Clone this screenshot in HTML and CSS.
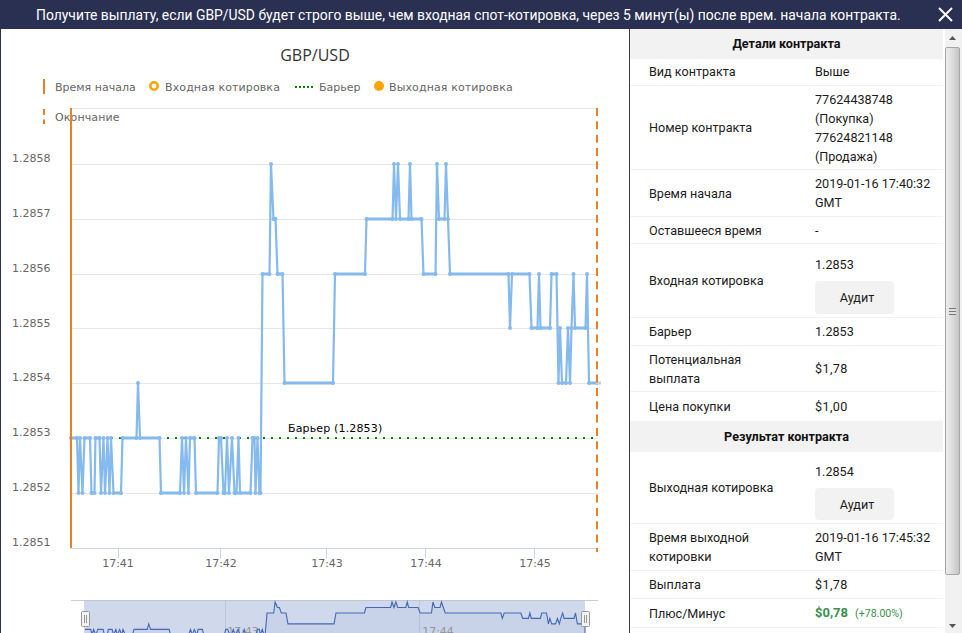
FILE: index.html
```html
<!DOCTYPE html>
<html lang="ru">
<head>
<meta charset="utf-8">
<title>Детали контракта</title>
<link rel="stylesheet" href="styles.css">
</head>
<body>
<header class="topbar">
  <span class="topbar-text">Получите выплату, если GBP/USD будет строго выше, чем входная спот-котировка, через 5 минут(ы) после врем. начала контракта.</span>
  <svg class="close" viewBox="0 0 15 15" width="15" height="15"><path d="M1 1L14 14M14 1L1 14"/></svg>
</header>
<main class="main">
  <section class="chart">
    <svg class="chart-svg" width="628" height="604" viewBox="1 29 628 604">
      <defs>
        <marker id="dot" markerUnits="userSpaceOnUse" markerWidth="6" markerHeight="6" refX="3" refY="3">
          <circle cx="3" cy="3" r="2" class="dot"/>
        </marker>
      </defs>
      <text class="title" x="315" y="61" text-anchor="middle">GBP/USD</text>

      <rect class="legend-start" x="43" y="79" width="2" height="15"/>
      <text class="legend legend-tight" x="55" y="91">Время начала</text>
      <circle class="legend-entry" cx="154" cy="86" r="3.7"/>
      <text class="legend" x="165" y="91">Входная котировка</text>
      <line class="legend-barrier" x1="295" x2="314" y1="87" y2="87"/>
      <text class="legend legend-tight" x="319" y="91">Барьер</text>
      <circle class="legend-exit" cx="379" cy="86" r="5"/>
      <text class="legend" x="389" y="91">Выходная котировка</text>
      <line class="legend-end" x1="44" x2="44" y1="109" y2="124"/>
      <text class="legend" x="55" y="121">Окончание</text>

      <path class="grid" d="M71 108.500H598M71 164.500H598M71 219.500H598M71 274.500H598M71 328.500H598M71 383.500H598M69 438.500H598M71 493.500H598"/>
      <path class="axis" d="M71 548.500H598M118.500 548V558M220.500 548V558M326.500 548V558M425.500 548V558M534.500 548V558"/>
      <text class="tick" x="12" y="162">1.2858</text>
      <text class="tick" x="12" y="217">1.2857</text>
      <text class="tick" x="12" y="272">1.2856</text>
      <text class="tick" x="12" y="327">1.2855</text>
      <text class="tick" x="12" y="381">1.2854</text>
      <text class="tick" x="12" y="436">1.2853</text>
      <text class="tick" x="12" y="491">1.2852</text>
      <text class="tick" x="12" y="546">1.2851</text>
      <text class="tick" x="118" y="567" text-anchor="middle">17:41</text>
      <text class="tick" x="221" y="567" text-anchor="middle">17:42</text>
      <text class="tick" x="327" y="567" text-anchor="middle">17:43</text>
      <text class="tick" x="426" y="567" text-anchor="middle">17:44</text>
      <text class="tick" x="535" y="567" text-anchor="middle">17:45</text>

      <line class="barrier" x1="71" x2="597" y1="438" y2="438"/>
      <path class="runs" d="M71 438H77M84.500 438H90M91.500 493H94.500M95.500 438H99.500M113.500 493H121M122.500 438H136.500M140 438H159.500M161 493H180M190 438H194.500M196 493H217.500M219 438H221M223.500 493H225M234.500 493H236.500M240 493H250.500M252.500 438H254.500M259.500 493H260.500M262.500 274H269.500M273.500 219H275.500M277.500 274H282.500M284.500 383H333M335 274H365M366.500 219H392.500M400 219H408.500M411.500 219H421.500M423.500 274H435.500M439 219H444.500M450 274H508.500M512 274H529.500M531.500 328H537.500M540.500 328H550M551.500 274H556.500M562 383H566M575 328H585.500M589 383H597"/>
      <polyline class="series" points="71,438 77,438 78.5,493 80,438 82.5,493 84.5,438 90,438 91.5,493 94.5,493 95.5,438 99.5,438 101,493 103.5,438 105,493 107.5,438 109.5,493 111,438 113.5,493 121,493 122.5,438 136.5,438 138,383 140,438 159.5,438 161,493 180,493 182,438 184,493 186,438 188.5,493 190,438 194.5,438 196,493 217.5,493 219,438 221,438 223.5,493 225,493 227,438 229,493 232,438 234.5,493 236.5,493 238.5,438 240,493 250.5,493 252.5,438 254.5,438 255.5,493 257.5,438 259.5,493 260.5,493 262.5,274 269.5,274 271,164 273.5,219 275.5,219 277.5,274 282.5,274 284.5,383 333,383 335,274 365,274 366.5,219 392.5,219 394,164 396,219 398,164 400,219 408.5,219 410,164 411.5,219 421.5,219 423.5,274 435.5,274 437,164 439,219 444.5,219 446,164 448,219 450,274 508.5,274 510,328 512,274 529.5,274 531.5,328 537.5,328 539,274 540.5,328 550,328 551.5,274 556.5,274 558.5,383 560,328 562,383 566,383 568,328 570,383 571.5,328 573.5,274 575,328 585.5,328 587,274 589,383 597,383"/>
      <line class="series-tail" x1="596" x2="601" y1="383" y2="383"/>
      <line class="start-line" x1="71" x2="71" y1="108" y2="548"/>
      <line class="end-line" x1="597" x2="597" y1="108" y2="552"/>
      <text class="barrier-label" x="288" y="432">Барьер (1.2853)</text>

      <path class="nav-border" d="M71 600.500H85M585 600.500H598"/>
      <rect class="nav-mask" x="84" y="600" width="501" height="33"/>
      <path class="nav-top" d="M84 600.500H585"/>
      <path class="nav-grid" d="M225.500 601V633M419.500 601V633"/>
      <text class="nav-tick" x="243" y="635" text-anchor="middle">17:43</text>
      <text class="nav-tick" x="438" y="635" text-anchor="middle">17:44</text>
      <g class="nav-series" transform="matrix(.9506 0 0 .1 17.5 585.600)">
        <polyline points="71,438 77,438 78.5,493 80,438 82.5,493 84.5,438 90,438 91.5,493 94.5,493 95.5,438 99.5,438 101,493 103.5,438 105,493 107.5,438 109.5,493 111,438 113.5,493 121,493 122.5,438 136.5,438 138,383 140,438 159.5,438 161,493 180,493 182,438 184,493 186,438 188.5,493 190,438 194.5,438 196,493 217.5,493 219,438 221,438 223.5,493 225,493 227,438 229,493 232,438 234.5,493 236.5,493 238.5,438 240,493 250.5,493 252.5,438 254.5,438 255.5,493 257.5,438 259.5,493 260.5,493 262.5,274 269.5,274 271,164 273.5,219 275.5,219 277.5,274 282.5,274 284.5,383 333,383 335,274 365,274 366.5,219 392.5,219 394,164 396,219 398,164 400,219 408.5,219 410,164 411.5,219 421.5,219 423.5,274 435.5,274 437,164 439,219 444.5,219 446,164 448,219 450,274 508.5,274 510,328 512,274 529.5,274 531.5,328 537.5,328 539,274 540.5,328 550,328 551.5,274 556.5,274 558.5,383 560,328 562,383 566,383 568,328 570,383 571.5,328 573.5,274 575,328 585.5,328 587,274 589,383 597,383 597,700 71,700"/>
      </g>
      <g class="handle">
        <rect x="81.500" y="611.500" width="8" height="15" rx="1"/>
        <path d="M84.500 615V623M86.500 615V623"/>
      </g>
      <g class="handle">
        <rect x="581.500" y="611.500" width="8" height="15" rx="1"/>
        <path d="M584.500 615V623M586.500 615V623"/>
      </g>
    </svg>
  </section>

  <aside class="details">
    <div class="table">
      <h3 class="heading h-top">Детали контракта</h3>
      <div class="row rh-27 row-first"><span class="label">Вид контракта</span><span class="value">Выше</span></div>
      <div class="row rh-84"><span class="label">Номер контракта</span><span class="value">77624438748<br>(Покупка)<br>77624821148<br>(Продажа)</span></div>
      <div class="row rh-47"><span class="label">Время начала</span><span class="value">2019-01-16 17:40:32 GMT</span></div>
      <div class="row rh-27"><span class="label">Оставшееся время</span><span class="value">-</span></div>
      <div class="row rh-74"><span class="label">Входная котировка</span><span class="value value-audit-a">1.2853<button class="audit audit-a">Аудит</button></span></div>
      <div class="row rh-28"><span class="label">Барьер</span><span class="value">1.2853</span></div>
      <div class="row rh-46"><span class="label">Потенциальная выплата</span><span class="value money">$1,78</span></div>
      <div class="row rh-29 row-last"><span class="label">Цена покупки</span><span class="value money">$1,00</span></div>
      <h3 class="heading h-bottom">Результат контракта</h3>
      <div class="row rh-72"><span class="label">Выходная котировка</span><span class="value value-audit-b">1.2854<button class="audit audit-b">Аудит</button></span></div>
      <div class="row rh-47"><span class="label">Время выходной котировки</span><span class="value">2019-01-16 17:45:32 GMT</span></div>
      <div class="row rh-28"><span class="label">Выплата</span><span class="value money">$1,78</span></div>
      <div class="row rh-29"><span class="label">Плюс/Минус</span><span class="value"><b class="profit">$0,78</b><small class="percent">(+78.00%)</small></span></div>
    </div>
    <div class="scrollbar">
      <svg class="arrow" viewBox="0 0 7 4" width="7" height="4"><path d="M3.500 0L7 4H0Z"/></svg>
      <div class="thumb"><span class="grip"></span></div>
      <svg class="arrow" viewBox="0 0 7 4" width="7" height="4"><path d="M0 0H7L3.500 4Z"/></svg>
    </div>
  </aside>
</main>
</body>
</html>
```

FILE: styles.css
```css
* { box-sizing: border-box; }
html, body { margin: 0; height: 633px; overflow: hidden; background: #fff; }
body { display: flex; flex-direction: column; font-family: Roboto, "Liberation Sans", sans-serif; color: #1c1c1c; }

.topbar {
  height: 29px; flex: none; display: flex; align-items: center; justify-content: space-between;
  padding: 0 9px 0 36px; background: #2a3052; color: #fff; font-size: 13.9px;
}
.topbar-text { white-space: nowrap; }
.close { display: block; }
.close path { stroke: #fff; stroke-width: 2; fill: none; }

.main { flex: 1; display: flex; min-height: 0; }
.chart { width: 629px; flex: none; border-left: 1px solid #2a3052; overflow: hidden; }
.chart-svg { display: block; }

.title { font: 16px "Open Sans", sans-serif; fill: #333; }
.legend { font: 11px "DejaVu Sans", sans-serif; fill: #666; letter-spacing: .12px; }
.legend-tight { letter-spacing: 0; }
.tick { font: 11px "DejaVu Sans", sans-serif; fill: #666; }
.nav-tick { font: 11px "DejaVu Sans", sans-serif; fill: #999; }
.barrier-label { font: 11px "DejaVu Sans", sans-serif; fill: #000; letter-spacing: .15px; }

.legend-start { fill: #e98024; }
.legend-entry { fill: #fff; stroke: #ffa500; stroke-width: 2.6; }
.legend-exit { fill: #ffa500; }
.legend-barrier { stroke: #008000; stroke-width: 2; stroke-dasharray: 2 2; }
.legend-end { stroke: #e98024; stroke-width: 2; stroke-dasharray: 6 4.500; }

.grid { stroke: #e6e6e6; fill: none; }
.axis { stroke: #ccd6eb; fill: none; }
.barrier { stroke: #008000; stroke-width: 2; stroke-dasharray: 2 6; }
.series { fill: none; stroke: #85baee; stroke-width: 2.200; stroke-linejoin: round; marker: url(#dot); }
.dot { fill: #85baee; }
.runs { fill: none; stroke: #85baee; stroke-width: 3; stroke-linecap: round; }
.series-tail { stroke: #ccc; stroke-width: 3; }
.start-line { stroke: #e98024; stroke-width: 2; }
.end-line { stroke: #e98024; stroke-width: 2; stroke-dasharray: 8 5.330; }

.nav-border { stroke: #ccc; fill: none; }
.nav-top { stroke: #bfc5d2; fill: none; }
.nav-mask { fill: #d0d9ec; }
.nav-grid { stroke: #bcc5dc; fill: none; }
.nav-series polyline { fill: rgba(51, 92, 173, .05); stroke: #4468b4; stroke-width: 1.100; vector-effect: non-scaling-stroke; }
.handle rect { fill: #f2f2f2; stroke: #999; }
.handle path { stroke: #999; fill: none; }

.details { flex: 1; display: flex; border-left: 1px solid #3c3c3c; min-width: 0; }
.table { width: 313px; flex: none; font-size: 12.600px; line-height: 19px; }
.heading { margin: 0; background: #f2f2f2; font-size: 12.600px; font-weight: 700; text-align: center; color: #111; display: flex; align-items: center; justify-content: center; }
.h-top { height: 30px; padding-bottom: 2px; }
.h-bottom { height: 31px; }
.row { display: flex; align-items: center; border-bottom: 1px solid #f2f2f2; }
.row-first { padding-bottom: 1px; }
.row-last { border-bottom: 0; }
.rh-27 { height: 27px; }
.rh-28 { height: 28px; }
.rh-29 { height: 29px; }
.rh-46 { height: 46px; }
.rh-47 { height: 47px; }
.rh-72 { height: 72px; }
.rh-74 { height: 74px; }
.rh-84 { height: 84px; }
.label { width: 185px; flex: none; padding: 0 30px 0 19px; }
.value { flex: 1; padding-right: 8px; }
.value-audit-a { padding-top: 8px; }
.value-audit-b { padding-top: 7px; }
.money { letter-spacing: .4px; }
.audit {
  display: block; width: 79px; border: 0; border-radius: 4px; background: #f2f2f2;
  font: 12.600px Roboto, sans-serif; color: #1c1c1c; padding: 0 0 0 5px;
}
.audit-a { height: 33px; margin-top: 7px; }
.audit-b { height: 32px; margin-top: 7px; }
.profit { color: #3a8f4e; font-weight: 700; font-size: 13px; }
.percent { color: #3a8f4e; font-size: 10.600px; margin-left: 7px; }

.scrollbar { flex: 1; margin-left: 2px; display: flex; flex-direction: column; align-items: center; background: #f1f1f1; padding: 7px 2px 5px 0; }
.arrow { flex: none; fill: #555; display: block; }
.thumb {
  width: 15px; height: 528px; margin: 7px 0 49px; flex: none; display: flex; align-items: center; justify-content: center;
  border: 1px solid #a6a6a6; border-radius: 2px; background: linear-gradient(90deg, #ececec, #dcdcdc 50%, #c4c4c4);
}
.grip { width: 7px; height: 7px; border-top: 1px solid #777; border-bottom: 1px solid #777; background: linear-gradient(#e0e0e0 2px, #777 2px, #777 3px, #e0e0e0 3px); }
```
